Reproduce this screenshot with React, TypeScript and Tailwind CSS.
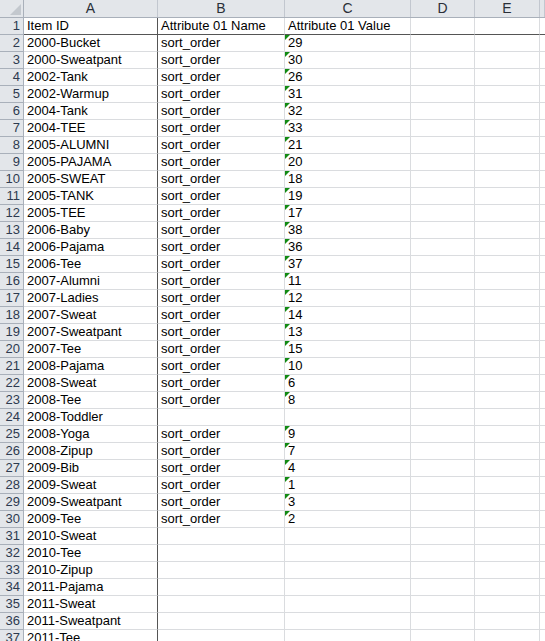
const rows: [string, string, string][] = [
  ["Item ID", "Attribute 01 Name", "Attribute 01 Value"],
  ["2000-Bucket", "sort_order", "29"],
  ["2000-Sweatpant", "sort_order", "30"],
  ["2002-Tank", "sort_order", "26"],
  ["2002-Warmup", "sort_order", "31"],
  ["2004-Tank", "sort_order", "32"],
  ["2004-TEE", "sort_order", "33"],
  ["2005-ALUMNI", "sort_order", "21"],
  ["2005-PAJAMA", "sort_order", "20"],
  ["2005-SWEAT", "sort_order", "18"],
  ["2005-TANK", "sort_order", "19"],
  ["2005-TEE", "sort_order", "17"],
  ["2006-Baby", "sort_order", "38"],
  ["2006-Pajama", "sort_order", "36"],
  ["2006-Tee", "sort_order", "37"],
  ["2007-Alumni", "sort_order", "11"],
  ["2007-Ladies", "sort_order", "12"],
  ["2007-Sweat", "sort_order", "14"],
  ["2007-Sweatpant", "sort_order", "13"],
  ["2007-Tee", "sort_order", "15"],
  ["2008-Pajama", "sort_order", "10"],
  ["2008-Sweat", "sort_order", "6"],
  ["2008-Tee", "sort_order", "8"],
  ["2008-Toddler", "", ""],
  ["2008-Yoga", "sort_order", "9"],
  ["2008-Zipup", "sort_order", "7"],
  ["2009-Bib", "sort_order", "4"],
  ["2009-Sweat", "sort_order", "1"],
  ["2009-Sweatpant", "sort_order", "3"],
  ["2009-Tee", "sort_order", "2"],
  ["2010-Sweat", "", ""],
  ["2010-Tee", "", ""],
  ["2010-Zipup", "", ""],
  ["2011-Pajama", "", ""],
  ["2011-Sweat", "", ""],
  ["2011-Sweatpant", "", ""],
  ["2011-Tee", "", ""],
];

const cols = "grid-cols-[24px_134px_127px_126px_64px_65px_1fr]";

// text stored as number flag: little green corner mark
const NumberAsText = () => (
  <svg className="absolute left-0 top-0" width="5" height="5" viewBox="0 0 5 5">
    <polygon points="0,0 5,0 0,5" fill="#128a12" />
  </svg>
);

export default function App() {
  return (
    <div
      className="h-[641px] w-[545px] overflow-hidden bg-white text-[13px] text-black"
      style={{ fontFamily: '"Liberation Sans", Arial, sans-serif' }}
    >
      {/* column headers */}
      <div className={`grid ${cols} h-[18px] border-b border-[#a9b0ba] bg-[#e3e6ea] text-[14px] leading-[17px] text-[#2a2f38]`}>
        <div className="relative border-r border-[#a9b0ba]">
          <svg className="absolute bottom-[2px] right-[2px]" width="11" height="11" viewBox="0 0 11 11">
            <polygon points="11,0 11,11 0,11" fill="#c3c8ce" />
          </svg>
        </div>
        {["A", "B", "C", "D", "E", ""].map((c, i) => (
          <div key={i} className="border-r border-[#c2c7cf] text-center">
            {c}
          </div>
        ))}
      </div>

      {rows.map((r, i) => {
        const frozen = i === 0;
        const line = frozen ? "border-b border-[#555]" : "border-b border-[#dadcdf]";
        return (
          <div key={i} className={`grid ${cols} h-[17px] leading-[16px]`}>
            <div
              className={`border-r border-b border-[#a9b0ba] bg-[#e3e6ea] pr-[3px] text-right text-[#2d3a4f] ${
                frozen ? "" : ""
              }`}
            >
              {i + 1}
            </div>
            <div className={`${line} border-r border-r-[#555] pl-[3px] whitespace-nowrap`}>{r[0]}</div>
            <div className={`${line} border-r border-r-[#dadcdf] pl-[3px] whitespace-nowrap`}>{r[1]}</div>
            <div className={`${line} relative border-r border-r-[#dadcdf] pl-[3px]`}>
              {r[2] && i > 0 && <NumberAsText />}
              {r[2]}
            </div>
            <div className={`${line} border-r border-r-[#dadcdf]`} />
            <div className={`${line} border-r border-r-[#dadcdf]`} />
            <div className={line} />
          </div>
        );
      })}
    </div>
  );
}
